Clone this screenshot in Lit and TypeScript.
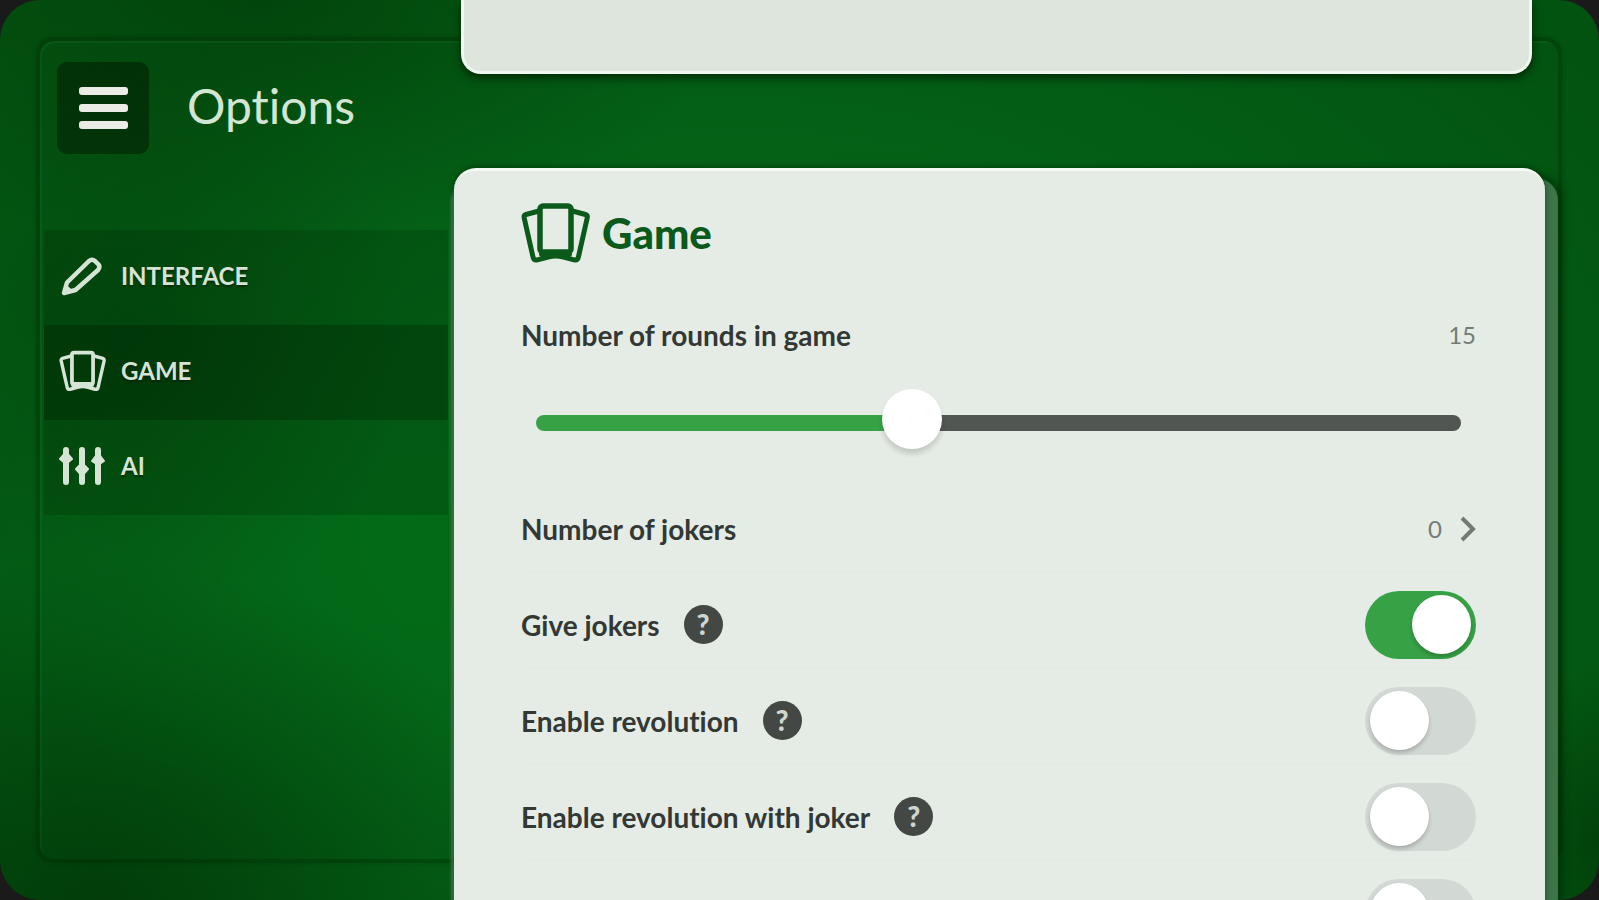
import { LitElement, html, svg, css } from "lit";
import { customElement, state } from "lit/decorators.js";
import { classMap } from "lit/directives/class-map.js";

const cardsIcon = svg`
  <svg class="icon-cards" viewBox="0 0 69 60" fill="none" stroke="currentColor" stroke-linejoin="round" stroke-linecap="round" aria-hidden="true">
    <rect x="19" y="3" width="31" height="46" rx="3" stroke-width="5.5" />
    <path stroke-width="5" d="M18 8 L5 11.5 Q2.6 12.2 3.2 15 L12 54 Q12.8 57.6 16.5 56.8 L27 54 Q34.7 52 42.5 54 L53 56.8 Q56.6 57.6 57.4 54 L66.2 15 Q66.8 12.2 64.4 11.5 L51.4 8" />
    <path stroke-width="6" d="M21 51 H48" />
  </svg>`;

const pencilIcon = svg`
  <svg class="icon-pencil" viewBox="0 0 42 40" fill="none" stroke="currentColor" stroke-linejoin="round" aria-hidden="true">
    <path stroke-width="4.5" d="M3 37 L6 26.5 L28 5 Q31 2.5 34 5 L37.5 8.5 Q39.5 11 37 14 L14.5 34 Z" />
    <path fill="currentColor" stroke="none" d="M3 37 L5 29 L8 31 L12 35 Z" />
  </svg>`;

const mixerIcon = svg`
  <svg class="icon-mixer" viewBox="0 0 46 40" fill="none" stroke="currentColor" stroke-width="6" stroke-linecap="round" aria-hidden="true">
    <path d="M7 4 V36 M23 4 V36 M39 4 V36" />
    <path fill="currentColor" stroke-width="2" stroke-linejoin="round" d="M7 6 L13 13 L7 18 L1 13 Z M23 17 L29 23 L23 30 L17 23 Z M39 7 L45 15 L39 19 L33 15 Z" />
  </svg>`;

const menu = [
  { id: "interface", label: "INTERFACE", icon: pencilIcon },
  { id: "game", label: "GAME", icon: cardsIcon },
  { id: "ai", label: "AI", icon: mixerIcon },
];

@customElement("app-root")
export class AppRoot extends LitElement {
  static styles = css`
    :host {
      display: block;
      height: 100vh;
      overflow: hidden;
      background: #1b1a1a;
      font-family: Lato, "Open Sans", sans-serif;
      font-variant-ligatures: none;
      color: #333835;
    }
    * { box-sizing: border-box; }
    button { font: inherit; color: inherit; border: 0; background: none; padding: 0; cursor: pointer; }
    svg { display: block; }
    .board {
      position: relative;
      height: 100%;
      display: grid;
      grid-template-columns: 454px 1fr;
      border-radius: 40px;
      overflow: hidden;
      background:
        radial-gradient(ellipse 460px 260px at 260px 0, rgba(0, 35, 0, 0.36), transparent),
        radial-gradient(ellipse 440px 340px at 100px 900px, rgba(0, 30, 0, 0.48), transparent),
        radial-gradient(ellipse 280px 300px at 130px 330px, rgba(0, 30, 0, 0.24), transparent),
        radial-gradient(ellipse 100px 180px at 1599px 840px, rgba(0, 35, 0, 0.4), transparent),
        radial-gradient(ellipse 400px 300px at 400px 560px, rgba(0, 120, 25, 0.25), transparent),
        radial-gradient(ellipse 1200px 800px at 46% 56%, #046618 30%, #02500f 100%);
    }
    .frame {
      position: absolute;
      inset: 37px 37px 37px 36px;
      border-radius: 18px;
      border: 4px solid rgba(0, 35, 0, 0.3);
      box-shadow: inset 2px 2px 1px rgba(60, 160, 80, 0.12), 0 0 4px rgba(0, 30, 0, 0.2);
      pointer-events: none;
    }
    .side { position: relative; padding-top: 62px; color: #eaf0e8; }
    .top { display: flex; align-items: center; gap: 38px; padding-left: 57px; }
    .burger {
      width: 92px;
      height: 92px;
      border-radius: 10px;
      background: rgba(0, 25, 0, 0.5);
      display: grid;
      align-content: center;
      justify-items: center;
      gap: 9px;
    }
    .bar { width: 49px; height: 8px; border-radius: 3px; background: #ecece6; }
    .heading { margin: 0; padding-bottom: 4px; font-size: 48px; line-height: 60px; font-weight: 400; color: #d3e6d3; }
    .menu { margin: 76px 6px 0 44px; }
    .item {
      width: 100%;
      height: 95px;
      display: grid;
      grid-template-columns: 47px 1fr;
      align-items: center;
      gap: 15px;
      padding: 0 0 4px 15px;
      text-align: left;
      font-size: 24px;
      line-height: 32px;
      font-weight: 700;
      color: #d6e4d5;
      background: rgba(0, 30, 0, 0.2);
      text-shadow: 0 2px 2px rgba(0, 20, 0, 0.5);
    }
    .item.active { background: rgba(0, 25, 0, 0.42); }
    .item .icon-cards { width: 47px; height: 42px; }
    .item .icon-pencil { width: 42px; height: 40px; margin-left: 2px; }
    .item .icon-mixer { width: 46px; height: 40px; }

    .content { position: relative; min-width: 0; height: 100vh; padding-right: 54px; }
    .previous {
      height: 74px;
      margin: 0 13px 94px 7px;
      border: 3px solid #f1f7f1;
      border-top: 0;
      border-radius: 0 0 20px 20px;
      background: #dde5dd;
      box-shadow: 0 4px 10px rgba(0, 30, 0, 0.8);
    }
    .panel {
      border-radius: 22px 22px 0 0;
      background: #e4ece5;
      border-top: 3px solid #f4f9f4;
      padding: 0 69px 0 67px;
      box-shadow: 0 -1px 6px rgba(0, 30, 0, 0.5), -3px 12px 3px rgba(120, 155, 125, 0.55), 13px 10px 1px #3e7649, 17px 8px 8px rgba(0, 30, 0, 0.5);
    }
    .title {
      margin: 0;
      height: 120px;
      padding-top: 4px;
      display: flex;
      align-items: center;
      gap: 12px;
      font-size: 42px;
      line-height: 48px;
      font-weight: 900;
      color: #0b5a1c;
      border-bottom: 1px solid #e1eae3;
    }
    .title .icon-cards { width: 69px; height: 60px; }
    .rounds { height: 186px; padding-top: 28px; }
    .line { display: flex; align-items: center; justify-content: space-between; }
    .label { font-size: 28px; line-height: 32px; font-weight: 700; color: #333835; }
    .value { font-size: 24px; line-height: 32px; color: #737b75; }
    .slider-box { padding: 36px 15px 0 15px; }
    .slider {
      display: block;
      appearance: none;
      width: 100%;
      height: 72px;
      margin: 0;
      background: none;
      cursor: pointer;
    }
    .slider::-webkit-slider-runnable-track {
      height: 16px;
      border-radius: 8px;
      background: linear-gradient(to right, #37a146 var(--fill), #515653 var(--fill));
    }
    .slider::-webkit-slider-thumb {
      appearance: none;
      width: 60px;
      height: 60px;
      margin-top: -26px;
      border-radius: 50%;
      background: #fff;
      box-shadow: 0 5px 5px rgba(0, 0, 0, 0.14);
    }
    .row {
      height: 96px;
      padding-top: 8px;
      display: flex;
      align-items: center;
      justify-content: space-between;
      border-bottom: 1px solid #e1e9e2;
    }
    .named { display: flex; align-items: center; gap: 24px; }
    .help {
      width: 39px;
      height: 39px;
      border-radius: 50%;
      background: #434845;
      color: #cfd6d0;
      font-size: 28px;
      line-height: 39px;
      font-weight: 900;
      text-align: center;
    }
    .pick { display: flex; align-items: center; gap: 18px; }
    .chevron { width: 16px; height: 26px; color: #737a75; }
    .toggle {
      appearance: none;
      width: 111px;
      height: 68px;
      margin: 0;
      padding: 4px 5px;
      display: flex;
      border-radius: 34px;
      background: #d2d8d4;
      cursor: pointer;
    }
    .toggle::before {
      content: "";
      width: 59px;
      height: 59px;
      border-radius: 50%;
      background: #fff;
      box-shadow: 0 3px 4px rgba(0, 0, 0, 0.2);
    }
    .toggle:checked { background: #37a146; justify-content: flex-end; }
  `;

  @state() private current = "game";
  @state() private rounds = 15;
  @state() private switches = [
    { id: "give", label: "Give jokers", on: true },
    { id: "revolution", label: "Enable revolution", on: false },
    { id: "revolution-joker", label: "Enable revolution with joker", on: false },
  ];

  render() {
    const fill = ((this.rounds - 1) / 35) * 100;
    return html`
      <div class="board">
        <div class="frame"></div>
        <aside class="side">
          <header class="top">
            <button class="burger" aria-label="Menu">
              <span class="bar"></span><span class="bar"></span><span class="bar"></span>
            </button>
            <h1 class="heading">Options</h1>
          </header>
          <nav class="menu">
            ${menu.map(
              (m) => html`<button
                class=${classMap({ item: true, active: m.id === this.current })}
                @click=${() => (this.current = m.id)}
              >${m.icon}<span>${m.label}</span></button>`
            )}
          </nav>
        </aside>
        <main class="content">
          <section class="previous"></section>
          <section class="panel">
            <h2 class="title">${cardsIcon}<span>Game</span></h2>
            <div class="rounds">
              <div class="line">
                <label class="label" for="rounds">Number of rounds in game</label>
                <output class="value" for="rounds">${this.rounds}</output>
              </div>
              <div class="slider-box">
                <input class="slider" id="rounds" type="range" min="1" max="36" .value=${String(this.rounds)}
                  style="--fill: ${fill}%"
                  @input=${(e: Event) => (this.rounds = Number((e.target as HTMLInputElement).value))} />
              </div>
            </div>
            <div class="row">
              <label class="label" for="jokers">Number of jokers</label>
              <button class="pick value" id="jokers">
                <span>0</span>
                <svg class="chevron" viewBox="0 0 16 26" fill="none" stroke="currentColor" stroke-width="4" aria-hidden="true">
                  <path d="M2 2 L13 13 L2 24" />
                </svg>
              </button>
            </div>
            ${this.switches.map(
              (s) => html`<div class="row">
                <div class="named">
                  <label class="label" for=${s.id}>${s.label}</label>
                  <button class="help" aria-label=${"Help: " + s.label}>?</button>
                </div>
                <input class="toggle" id=${s.id} type="checkbox" role="switch" .checked=${s.on} />
              </div>`
            )}
            <div class="row">
              <span></span>
              <input class="toggle" type="checkbox" role="switch" aria-label="More" />
            </div>
          </section>
        </main>
      </div>
    `;
  }
}
